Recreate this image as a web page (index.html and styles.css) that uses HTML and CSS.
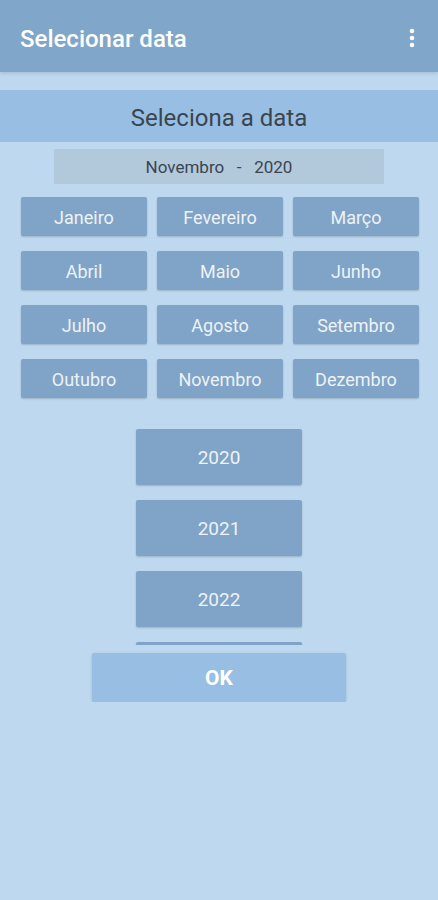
FILE: index.html
```html
<!DOCTYPE html>
<html lang="pt">

<head>
    <meta charset="UTF-8">
    <meta name="viewport" content="width=device-width, initial-scale=1.0">
    <title>Selecionar data</title>
    <link rel="stylesheet" href="styles.css">
</head>

<body>
    <header class="appbar">
        <span class="appbar-title">Selecionar data</span>
        <svg class="appbar-menu" width="6" height="20" viewBox="0 0 6 20">
            <circle cx="3" cy="3" r="2.3" fill="#fff" />
            <circle cx="3" cy="10" r="2.3" fill="#fff" />
            <circle cx="3" cy="17" r="2.3" fill="#fff" />
        </svg>
    </header>

    <div class="picker-title">Seleciona a data</div>

    <div class="current">Novembro&nbsp;&nbsp;&nbsp;-&nbsp;&nbsp;&nbsp;2020</div>

    <!-- months -->
    <div class="months">
        <button class="month">Janeiro</button>
        <button class="month">Fevereiro</button>
        <button class="month">Março</button>
        <button class="month">Abril</button>
        <button class="month">Maio</button>
        <button class="month">Junho</button>
        <button class="month">Julho</button>
        <button class="month">Agosto</button>
        <button class="month">Setembro</button>
        <button class="month">Outubro</button>
        <button class="month">Novembro</button>
        <button class="month">Dezembro</button>
    </div>

    <!-- years, scrollable list -->
    <div class="years">
        <button class="year">2020</button>
        <button class="year">2021</button>
        <button class="year">2022</button>
        <button class="year">2023</button>
    </div>

    <button class="ok">OK</button>
</body>

</html>
```

FILE: styles.css
```css
body {
    margin: 0;
    font-family: 'Roboto', 'Noto Sans', sans-serif;
    background-color: #bdd8ef;
}

button {
    font-family: inherit;
    border: none;
    cursor: pointer;
}

.appbar {
    height: 72px;
    background-color: #80a6c9;
    display: flex;
    align-items: center;
    justify-content: space-between;
    padding: 0 23px 0 20px;
    box-shadow: 0 1px 4px rgba(0, 0, 0, 0.15);
}

.appbar-title {
    color: #fff;
    font-size: 24px;
    font-weight: 500;
    margin-top: 6px;
}

.appbar-menu {
    margin-top: 4px;
}

.picker-title {
    margin-top: 18px;
    height: 52px;
    line-height: 56px;
    background-color: #98bfe3;
    color: #3a4550;
    text-align: center;
    font-size: 24px;
}

.current {
    width: 330px;
    height: 35px;
    margin: 7px auto 0;
    background-color: #b2c8db;
    color: #3a4550;
    font-size: 17px;
    line-height: 36px;
    text-align: center;
}

.months {
    display: grid;
    grid-template-columns: repeat(3, 126px);
    column-gap: 10px;
    row-gap: 15px;
    padding: 0 20px 0 21px;
    margin-top: 13px;
}

.month {
    height: 39px;
    padding: 2px 0 0;
    background-color: #7fa4c7;
    color: #eef2f6;
    font-size: 18px;
    border-radius: 2px;
    box-shadow: 0 1px 2px rgba(0, 0, 0, 0.18);
}

.years {
    height: 216px;
    margin-top: 31px;
    overflow: hidden;
    display: flex;
    flex-direction: column;
    align-items: center;
    gap: 15px;
}

.year {
    flex: none;
    width: 166px;
    height: 56px;
    background-color: #7fa4c7;
    color: #eef2f6;
    font-size: 19px;
    border-radius: 2px;
    box-shadow: 0 1px 2px rgba(0, 0, 0, 0.18);
}

.ok {
    display: block;
    width: 254px;
    height: 49px;
    margin: 8px auto 0;
    background-color: #98bfe3;
    color: #fff;
    font-size: 21px;
    font-weight: bold;
    border-radius: 2px;
    box-shadow: 0 1px 3px rgba(0, 0, 0, 0.15);
}
```
